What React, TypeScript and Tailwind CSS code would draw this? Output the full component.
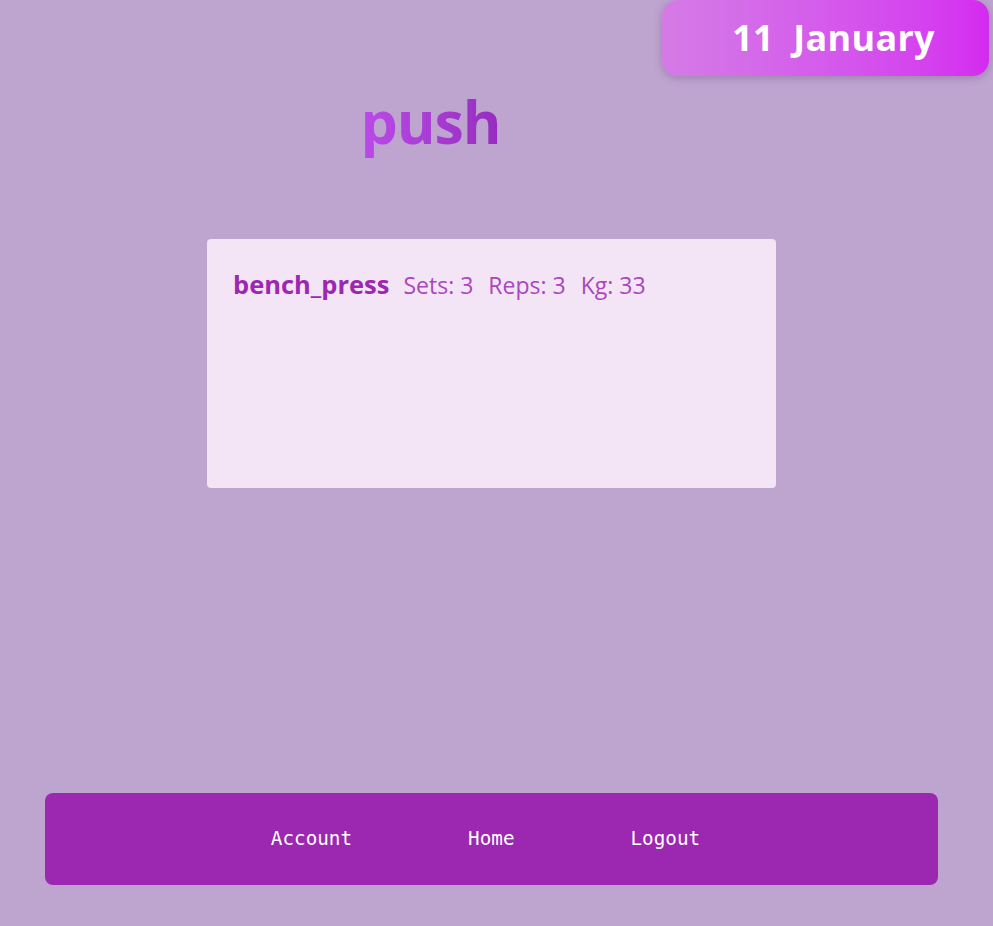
import React from "react";

const App = () => {
  const stats = [
    { label: "Sets", value: 3 },
    { label: "Reps", value: 3 },
    { label: "Kg", value: 33 },
  ];

  return (
    <div className="relative min-h-[926px] w-full bg-[#bea5cf] font-['Open_Sans','Noto_Sans',sans-serif] overflow-hidden">
      {/* date badge */}
      <div className="absolute right-[4px] top-0 w-[327px] h-[76px] rounded-[16px] bg-gradient-to-r from-[#d47be6] to-[#d42af0] shadow-[0_2px_8px_rgba(80,40,100,0.3)] flex items-center justify-center pl-[16px]">
        <span className="text-white font-bold text-[36px] tracking-[0.3px] leading-none">11&nbsp; January</span>
      </div>

      <div className="flex flex-col items-center pt-[92px]">
        <h1 className="mr-[132px] text-[59px] font-bold leading-none pb-[12px] tracking-[-1px] bg-gradient-to-r from-[#bb4be9] to-[#962cbf] bg-clip-text text-transparent">
          push
        </h1>

        <div className="mt-[76px] mr-[10px] w-[569px] h-[249px] rounded-[4px] bg-[#f3e5f5] px-[26px] pt-[26px]">
          <div className="flex items-baseline gap-[14px]">
            <span className="text-[#9c27b0] font-bold text-[25.5px]">bench_press</span>
            <div className="flex items-baseline gap-[15px]">
              {stats.map((s) => (
                <span key={s.label} className="text-[#ab47bc] text-[23px]">
                  {s.label}: {s.value}
                </span>
              ))}
            </div>
          </div>
        </div>
      </div>

      <nav className="absolute left-[45px] top-[793px] w-[893px] h-[92px] rounded-[8px] bg-[#9c27b0] flex items-center justify-center pr-[12px] pt-[1px] gap-[116px] font-['DejaVu_Sans_Mono',monospace] text-[19.3px] text-white">
        <a>Account</a>
        <a>Home</a>
        <a>Logout</a>
      </nav>
    </div>
  );
};

export default App;
